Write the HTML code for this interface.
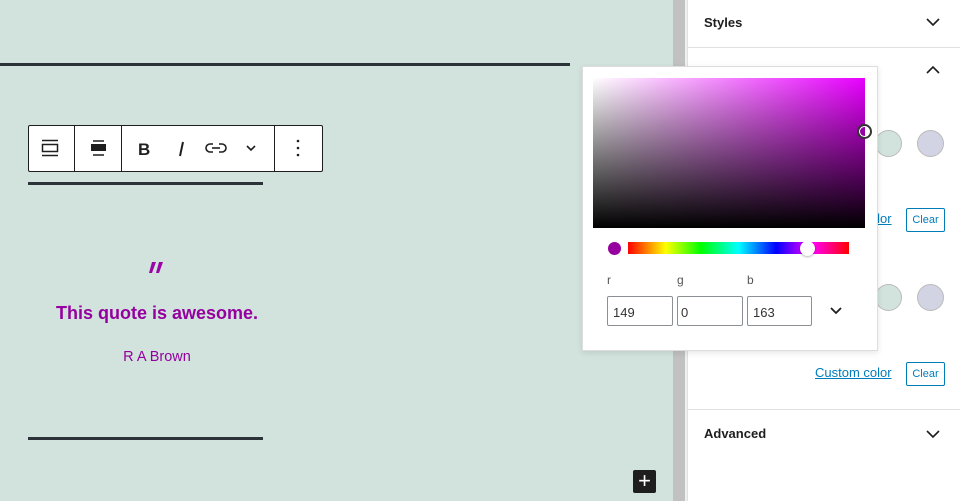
<!DOCTYPE html>
<html><head><meta charset="utf-8"><style>
*{margin:0;padding:0;box-sizing:border-box}
body{width:960px;height:501px;overflow:hidden;position:relative;background:#fff;font-family:"Liberation Sans",sans-serif}
.abs{position:absolute}
</style></head><body>
<div class="abs" style="left:0;top:0;width:673px;height:501px;background:#d2e3de"></div>
<div class="abs" style="left:673px;top:0;width:12px;height:501px;background:#c1c1c1"></div>
<div class="abs" style="left:685px;top:0;width:2px;height:501px;background:#f0f0f0"></div>
<div class="abs" style="left:687px;top:0;width:1px;height:501px;background:#e0e0e0"></div>

<div class="abs" style="left:0;top:63px;width:570px;height:3px;background:#2c3338"></div>
<div class="abs" style="left:28px;top:182px;width:235px;height:3px;background:#2c3338"></div>
<div class="abs" style="left:28px;top:437px;width:235px;height:3px;background:#2c3338"></div>

<!-- toolbar -->
<div class="abs" style="left:28px;top:125px;width:295px;height:47px;background:#fff;border:1px solid #1e1e1e;border-radius:2px"></div>
<div class="abs" style="left:74px;top:126px;width:1px;height:45px;background:#1e1e1e"></div>
<div class="abs" style="left:121px;top:126px;width:1px;height:45px;background:#1e1e1e"></div>
<div class="abs" style="left:274px;top:126px;width:1px;height:45px;background:#1e1e1e"></div>
<svg class="abs" style="left:28px;top:125px" width="295" height="47">
<g fill="none" stroke="#1e1e1e" stroke-width="1.5">
<line x1="14" y1="15.5" x2="30" y2="15.5"/><rect x="14.5" y="19.5" width="15" height="7"/><line x1="14" y1="30.5" x2="30" y2="30.5"/>
<line x1="65" y1="16" x2="76" y2="16"/><line x1="65" y1="30" x2="76" y2="30"/>
</g>
<rect x="63" y="19" width="15" height="7" fill="#1e1e1e"/>
<text x="110" y="30" font-size="17" font-weight="bold" fill="#1e1e1e">B</text>
<line x1="155" y1="17" x2="152" y2="31" stroke="#1e1e1e" stroke-width="2"/>
<g fill="none" stroke="#1e1e1e" stroke-width="1.6"><path d="M185 19h-3a4 4 0 0 0 0 8h3M191 19h3a4 4 0 0 1 0 8h-3"/><line x1="184" y1="23" x2="192" y2="23"/>
<path d="M219 21l4 4 4-4"/></g>
<circle cx="270" cy="16" r="1.3" fill="#1e1e1e"/><circle cx="270" cy="23" r="1.3" fill="#1e1e1e"/><circle cx="270" cy="30" r="1.3" fill="#1e1e1e"/>
</svg>

<svg class="abs" style="left:148px;top:260px" width="20" height="16"><path d="M4 2h4l-4 11h-3zM11 2h4l-4 11h-3z" fill="#9a05a8"/></svg>
<div class="abs" style="left:28px;top:303px;width:258px;text-align:center;font-size:18px;font-weight:bold;color:#95009f;font-family:'Liberation Sans',sans-serif">This quote is awesome.</div>
<div class="abs" style="left:28px;top:349px;width:258px;text-align:center;font-size:14.5px;color:#95009f">R A Brown</div>

<div class="abs" style="left:633px;top:470px;width:23px;height:23px;background:#1e1e1e;border-radius:2px;color:#fff;font-size:22px;line-height:22px;text-align:center">+</div>

<!-- sidebar -->
<div class="abs" style="left:704px;top:15px;font-size:13px;font-weight:bold;color:#1e1e1e">Styles</div>
<svg class="abs" style="left:925px;top:16px" width="16" height="12"><path d="M2 3l6 6 6-6" fill="none" stroke="#1e1e1e" stroke-width="1.6"/></svg>
<div class="abs" style="left:688px;top:47px;width:272px;height:1px;background:#e0e0e0"></div>
<svg class="abs" style="left:925px;top:64px" width="16" height="12"><path d="M2 9l6-6 6 6" fill="none" stroke="#1e1e1e" stroke-width="1.6"/></svg>
<div class="abs" style="left:875px;top:130px;width:27px;height:27px;border-radius:50%;background:#d2e3de;border:1px solid #bbb"></div>
<div class="abs" style="left:917px;top:130px;width:27px;height:27px;border-radius:50%;background:#d2d3e3;border:1px solid #bbb"></div>
<div class="abs" style="left:875px;top:284px;width:27px;height:27px;border-radius:50%;background:#d2e3de;border:1px solid #bbb"></div>
<div class="abs" style="left:917px;top:284px;width:27px;height:27px;border-radius:50%;background:#d2d3e3;border:1px solid #bbb"></div>
<div class="abs" style="left:815px;top:211px;font-size:13px;color:#007cba;text-decoration:underline">Custom color</div>
<div class="abs" style="left:906px;top:208px;width:39px;height:24px;border:1px solid #007cba;border-radius:2px;font-size:11px;color:#007cba;text-align:center;line-height:22px">Clear</div>
<div class="abs" style="left:815px;top:365px;font-size:13px;color:#007cba;text-decoration:underline">Custom color</div>
<div class="abs" style="left:906px;top:362px;width:39px;height:24px;border:1px solid #007cba;border-radius:2px;font-size:11px;color:#007cba;text-align:center;line-height:22px">Clear</div>
<div class="abs" style="left:688px;top:409px;width:272px;height:1px;background:#e0e0e0"></div>
<div class="abs" style="left:704px;top:426px;font-size:13px;font-weight:bold;color:#1e1e1e">Advanced</div>
<svg class="abs" style="left:925px;top:428px" width="16" height="12"><path d="M2 3l6 6 6-6" fill="none" stroke="#1e1e1e" stroke-width="1.6"/></svg>

<!-- picker popup -->
<div class="abs" style="left:582px;top:66px;width:296px;height:285px;background:#fff;border:1px solid #ddd;box-shadow:0 2px 6px rgba(0,0,0,.1)"></div>
<div class="abs" style="left:593px;top:78px;width:272px;height:150px;background:linear-gradient(to top,#000,rgba(0,0,0,0)),linear-gradient(to right,#fff,#e800ff)"></div>
<div class="abs" style="left:857px;top:124px;width:15px;height:15px;border-radius:50%;border:2px solid #333;box-shadow:inset 0 0 0 1px #fff"></div>
<div class="abs" style="left:608px;top:242px;width:13px;height:13px;border-radius:50%;background:#95009f"></div>
<div class="abs" style="left:628px;top:242px;width:221px;height:12px;background:linear-gradient(to right,#f00,#ff0 17%,#0f0 33%,#0ff 50%,#00f 67%,#f0f 83%,#f00)"></div>
<div class="abs" style="left:800px;top:241px;width:15px;height:15px;border-radius:50%;background:#fff;box-shadow:0 1px 2px rgba(0,0,0,.3)"></div>
<div class="abs" style="left:607px;top:273px;font-size:12px;color:#555">r</div>
<div class="abs" style="left:677px;top:273px;font-size:12px;color:#555">g</div>
<div class="abs" style="left:747px;top:273px;font-size:12px;color:#555">b</div>
<div class="abs" style="left:607px;top:296px;width:66px;height:30px;border:1px solid #8c8f94;border-radius:2px;font-size:13px;color:#333;padding:8px 0 0 5px">149</div>
<div class="abs" style="left:677px;top:296px;width:66px;height:30px;border:1px solid #8c8f94;border-radius:2px;font-size:13px;color:#333;padding:8px 0 0 3px">0</div>
<div class="abs" style="left:747px;top:296px;width:65px;height:30px;border:1px solid #8c8f94;border-radius:2px;font-size:13px;color:#333;padding:8px 0 0 5px">163</div>
<svg class="abs" style="left:829px;top:305px" width="14" height="12"><path d="M2 3l5 5 5-5" fill="none" stroke="#1e1e1e" stroke-width="1.8"/></svg>
</body></html>
